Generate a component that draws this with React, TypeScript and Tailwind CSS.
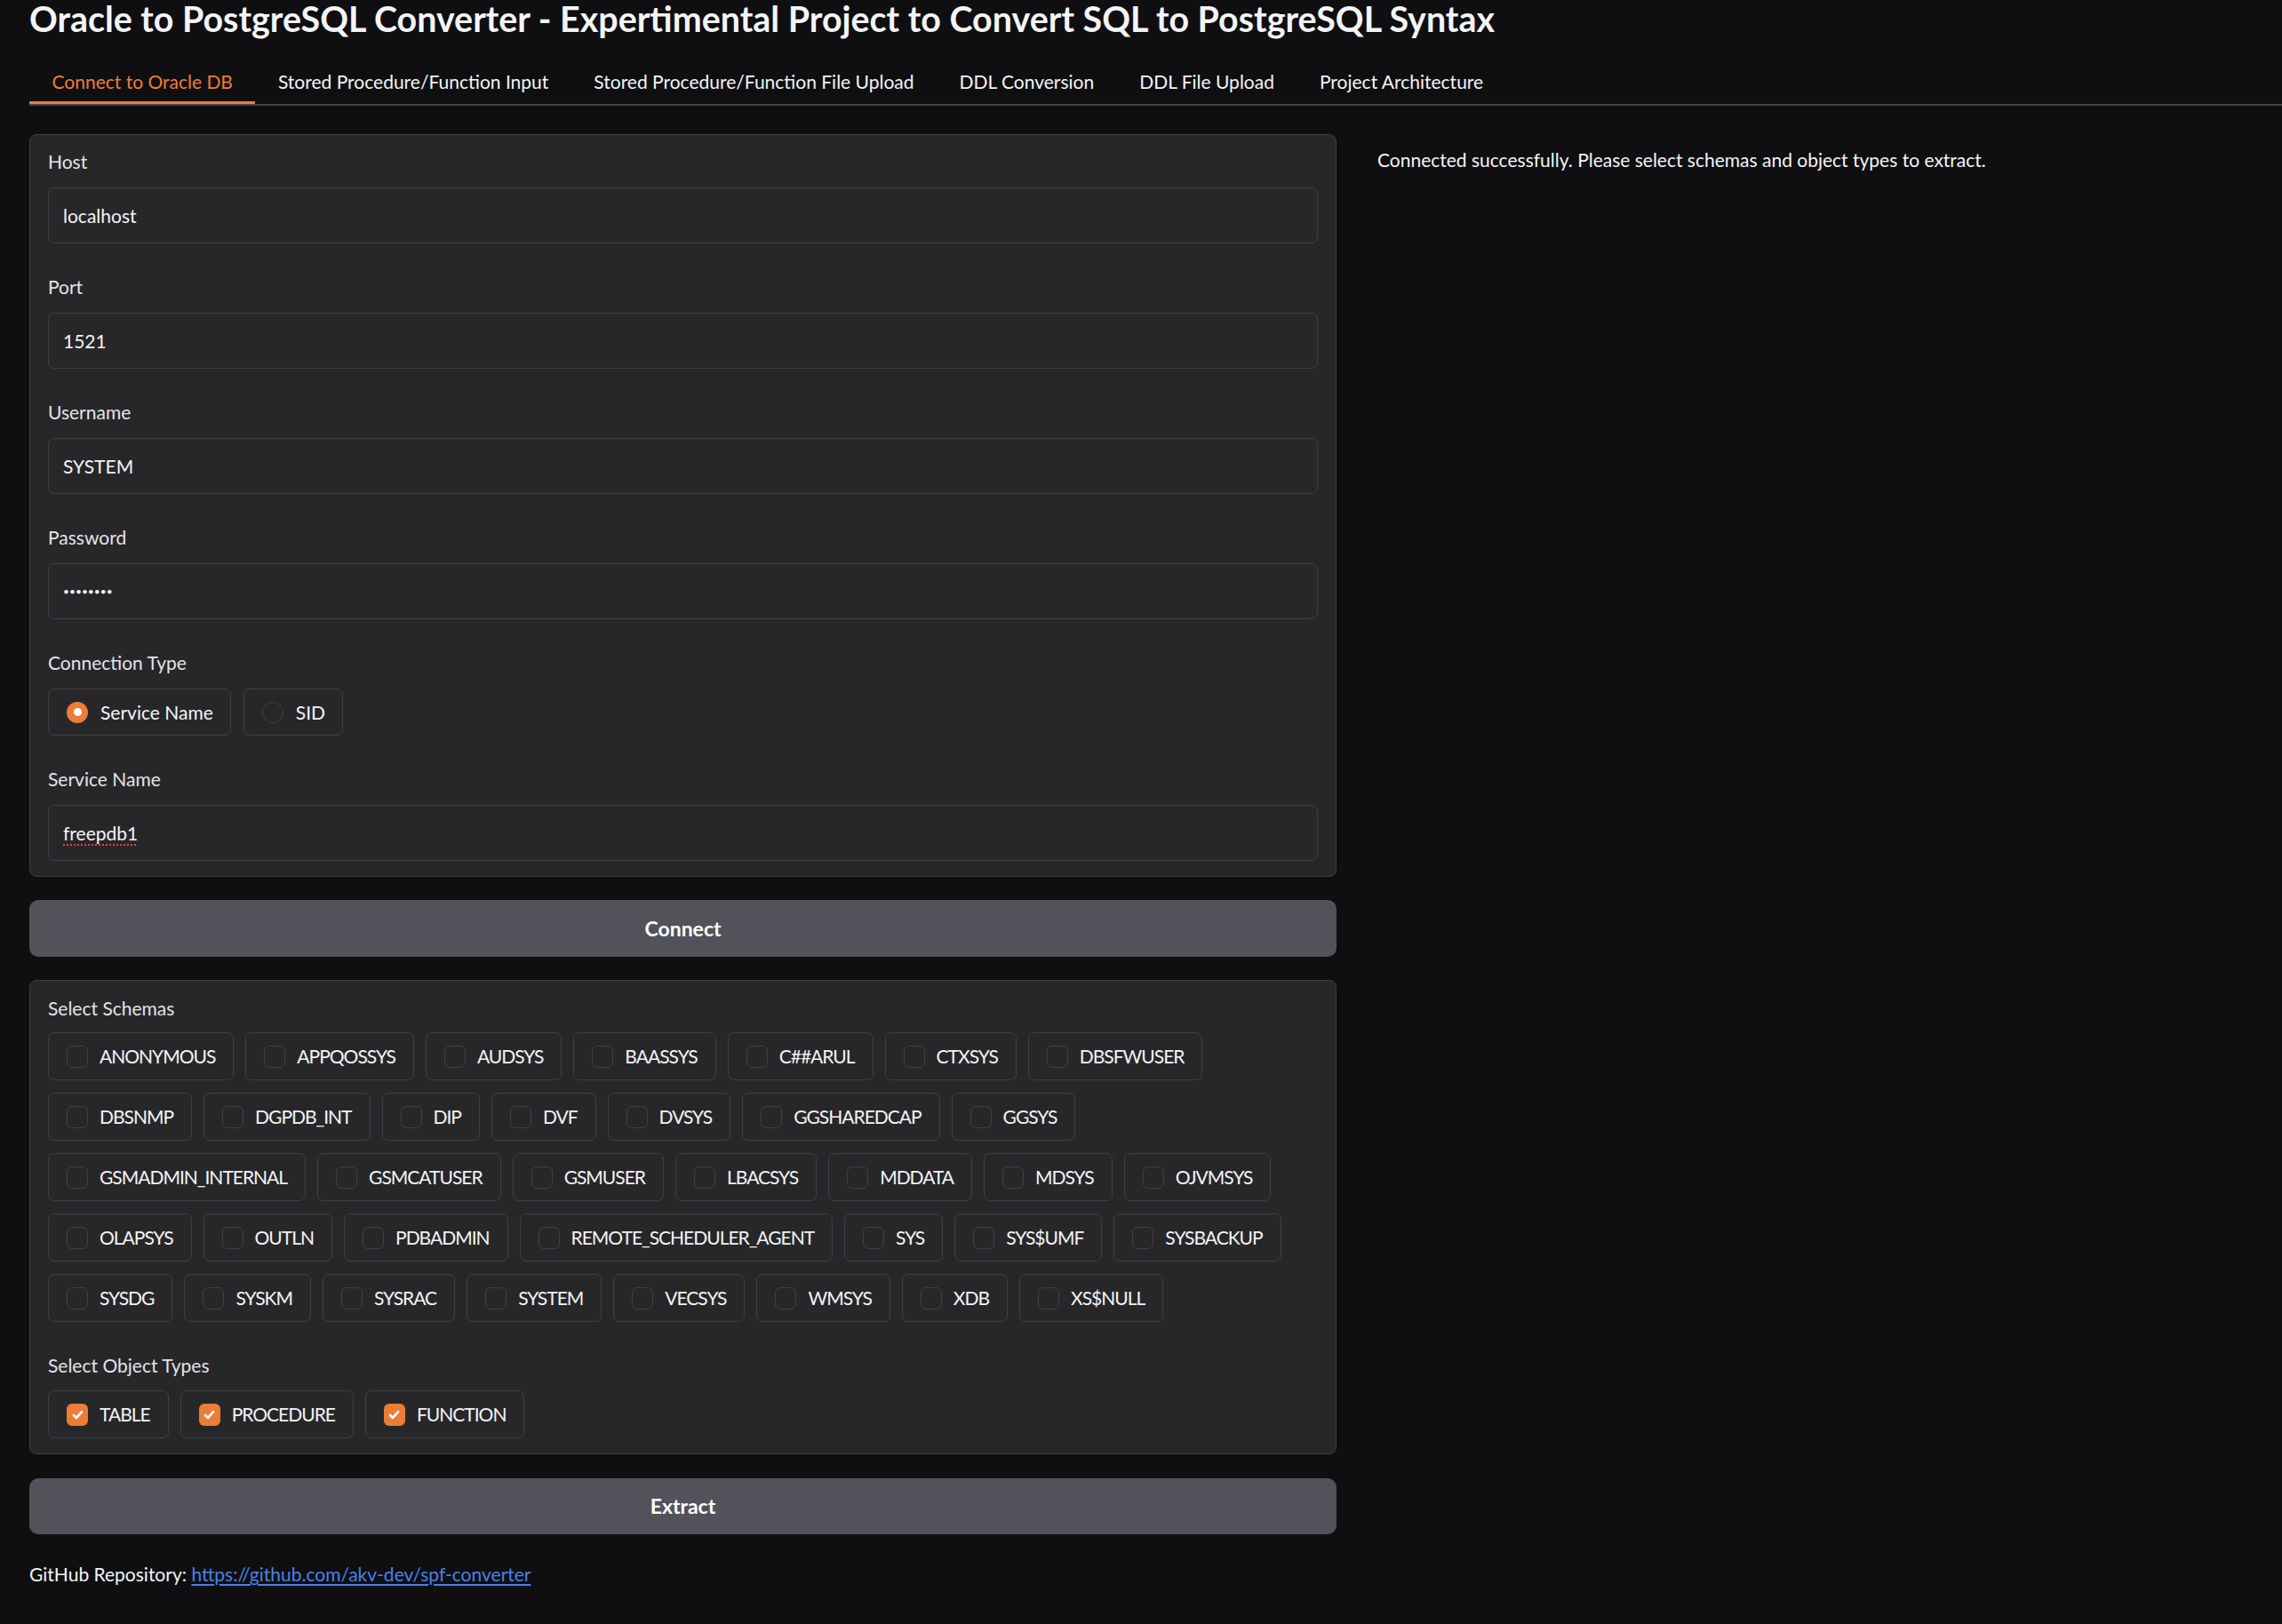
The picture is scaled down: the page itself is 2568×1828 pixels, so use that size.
import React from "react";

const tabs = [
  "Connect to Oracle DB",
  "Stored Procedure/Function Input",
  "Stored Procedure/Function File Upload",
  "DDL Conversion",
  "DDL File Upload",
  "Project Architecture",
];

const schemaRows = [
  ["ANONYMOUS", "APPQOSSYS", "AUDSYS", "BAASSYS", "C##ARUL", "CTXSYS", "DBSFWUSER"],
  ["DBSNMP", "DGPDB_INT", "DIP", "DVF", "DVSYS", "GGSHAREDCAP", "GGSYS"],
  ["GSMADMIN_INTERNAL", "GSMCATUSER", "GSMUSER", "LBACSYS", "MDDATA", "MDSYS", "OJVMSYS"],
  ["OLAPSYS", "OUTLN", "PDBADMIN", "REMOTE_SCHEDULER_AGENT", "SYS", "SYS$UMF", "SYSBACKUP"],
  ["SYSDG", "SYSKM", "SYSRAC", "SYSTEM", "VECSYS", "WMSYS", "XDB", "XS$NULL"],
];

const objectTypes = ["TABLE", "PROCEDURE", "FUNCTION"];

function Label({ children }: { children: React.ReactNode }) {
  return <div className="h-[34px] leading-[34px] text-[21px] text-[#e4e4e7]">{children}</div>;
}

function TextField({ label, value, password }: { label: string; value: React.ReactNode; password?: boolean }) {
  return (
    <div>
      <Label>{label}</Label>
      <div className="mt-[12px] h-[63px] rounded-[7px] border border-[#3f3f46] bg-[#27272a] px-[16px] flex items-center text-[21px] text-[#f4f4f5]">
        {password ? <span className="text-[12px]">••••••••</span> : value}
      </div>
    </div>
  );
}

function CheckItem({ label, checked }: { label: string; checked?: boolean }) {
  return (
    <div className="h-[54px] flex items-center gap-[13px] pl-[20px] pr-[20px] rounded-[7px] border border-[#3f3f46] bg-[#27272a]">
      {checked ? (
        <span className="w-[24px] h-[25px] rounded-[6px] bg-[#eb7d37] flex items-center justify-center">
          <svg width="15" height="15" viewBox="0 0 14 14" fill="none">
            <path d="M2.8 7.4 L5.6 10.2 L11.2 3.8" stroke="white" strokeWidth="2.5" strokeLinecap="round" strokeLinejoin="round" />
          </svg>
        </span>
      ) : (
        <span className="w-[24px] h-[25px] rounded-[6px] border border-[#3f3f46] bg-[#27272a]" />
      )}
      <span className="text-[21px] tracking-[-1px] text-[#f4f4f5]">{label}</span>
    </div>
  );
}

function Radio({ label, checked }: { label: string; checked?: boolean }) {
  return (
    <div className="h-[53px] flex items-center gap-[14px] pl-[20px] pr-[19px] rounded-[7px] border border-[#3f3f46] bg-[#27272a]">
      {checked ? (
        <span className="w-[24px] h-[24px] rounded-full bg-[#eb7d37] flex items-center justify-center">
          <span className="w-[9px] h-[9px] rounded-full bg-white" />
        </span>
      ) : (
        <span className="w-[24px] h-[24px] rounded-full border border-[#3f3f46] bg-[#27272a]" />
      )}
      <span className="text-[21px] text-[#f4f4f5]">{label}</span>
    </div>
  );
}

export default function App() {
  return (
    <div className="min-h-screen bg-[#0f0f11] text-[#f4f4f5] font-[Lato,sans-serif] pb-[40px]">
      <div className="pl-[33px]">
        <h1 className="text-[39.4px] leading-[42px] font-bold text-[#f4f4f5]">
          Oracle to PostgreSQL Converter - Expertimental Project to Convert SQL to PostgreSQL Syntax
        </h1>

        <div className="mt-[35px] flex border-b-2 border-[#45454d]">
          {tabs.map((t, i) => (
            <div
              key={t}
              className={
                i === 0
                  ? "px-[25.5px] h-[40px] leading-[30px] text-[21px] text-[#ef7b37] border-b-[3px] border-[#ef7b37] -mb-[2px]"
                  : "px-[25.5px] h-[40px] leading-[30px] text-[21px] text-[#f4f4f5]"
              }
            >
              {t}
            </div>
          ))}
        </div>

        <div className="mt-[32px] flex gap-[33px]">
          <div className="w-[1471px] shrink-0 flex flex-col">
            <div className="rounded-[8px] border border-[#3f3f46] bg-[#27272a] px-[20px] pt-[13px] pb-[17px] flex flex-col gap-[32px]">
              <TextField label="Host" value="localhost" />
              <TextField label="Port" value="1521" />
              <TextField label="Username" value="SYSTEM" />
              <TextField label="Password" value="" password />
              <div>
                <Label>Connection Type</Label>
                <div className="mt-[12px] flex gap-[14px]">
                  <Radio label="Service Name" checked />
                  <Radio label="SID" />
                </div>
              </div>
              <TextField
                label="Service Name"
                value={<span className="underline decoration-dotted decoration-[#e0443a] decoration-2 underline-offset-[5px]">freepdb1</span>}
              />
            </div>

            <button className="mt-[26px] h-[64px] rounded-[10px] bg-[#52525b] text-[23px] font-bold text-white">
              Connect
            </button>

            <div className="mt-[26px] rounded-[8px] border border-[#3f3f46] bg-[#27272a] px-[20px] pt-[14px] pb-[17px]">
              <Label>Select Schemas</Label>
              <div className="mt-[10px] flex flex-col gap-[14px]">
                {schemaRows.map((row, ri) => (
                  <div key={ri} className="flex gap-[13px]">
                    {row.map((s) => (
                      <CheckItem key={s} label={s} />
                    ))}
                  </div>
                ))}
              </div>
              <div className="mt-[32px]">
                <Label>Select Object Types</Label>
                <div className="mt-[11px] flex gap-[13px]">
                  {objectTypes.map((o) => (
                    <CheckItem key={o} label={o} checked />
                  ))}
                </div>
              </div>
            </div>

            <button className="mt-[27px] h-[63px] rounded-[10px] bg-[#52525b] text-[23px] font-bold text-white">
              Extract
            </button>

            <div className="mt-[28px] text-[21px] leading-[34px] text-[#f4f4f5]">
              GitHub Repository:{" "}
              <a href="#" className="text-[#4a82e6] underline underline-offset-[3px]">
                https://github.com/akv-dev/spf-converter
              </a>
            </div>
          </div>

          <div className="pl-[13px] pt-[12px] text-[21px] leading-[34px] text-[#f4f4f5]">
            Connected successfully. Please select schemas and object types to extract.
          </div>
        </div>
      </div>
    </div>
  );
}
